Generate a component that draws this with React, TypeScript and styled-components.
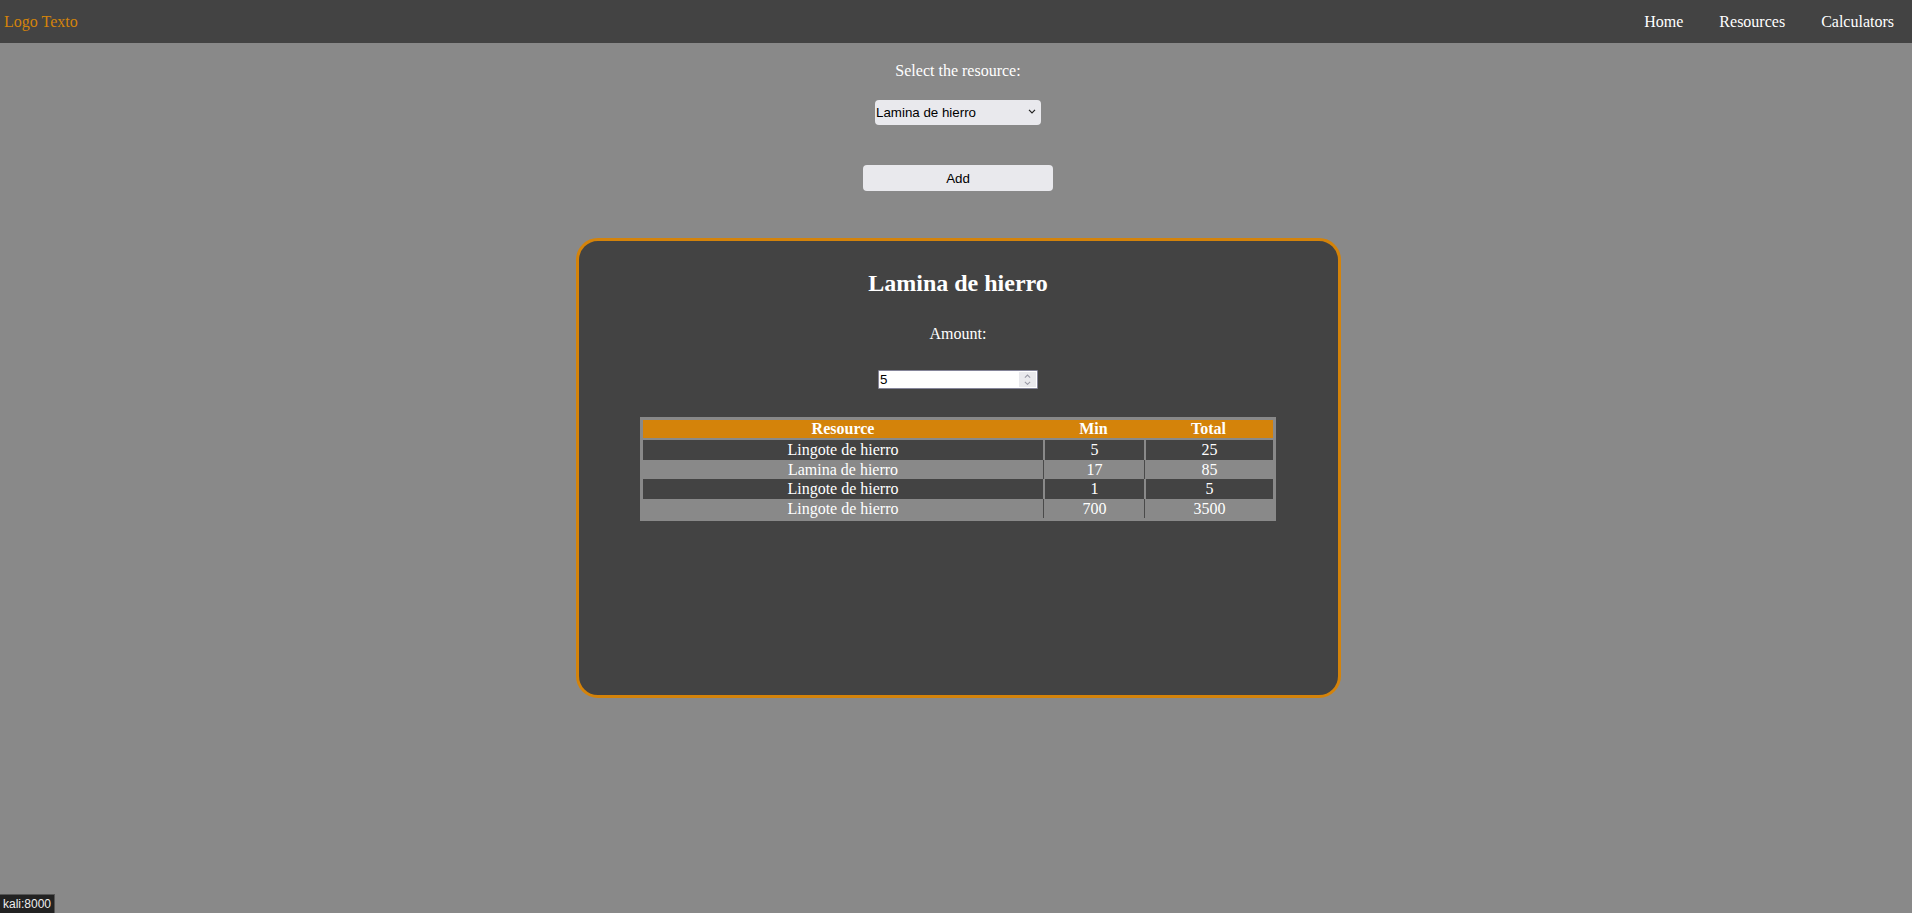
import React from "react";
import styled, { createGlobalStyle } from "styled-components";

const colors = {
  dark: "#434343",
  gray: "#898989",
  orange: "#d4830a",
  control: "#e9e9ed",
};

const GlobalStyle = createGlobalStyle`
  html, body {
    margin: 0;
    padding: 0;
    background: ${colors.gray};
    color: #ffffff;
    font-family: "Liberation Serif", "Times New Roman", serif;
    font-size: 16px;
  }
`;

type Row = { name: string; min: number; total: number };

const rows: Row[] = [
  { name: "Lingote de hierro", min: 5, total: 25 },
  { name: "Lamina de hierro", min: 17, total: 85 },
  { name: "Lingote de hierro", min: 1, total: 5 },
  { name: "Lingote de hierro", min: 700, total: 3500 },
];

const NavBar = styled.nav`
  height: 43px;
  background: ${colors.dark};
  display: flex;
  align-items: center;
  justify-content: space-between;
`;

const Logo = styled.a`
  color: ${colors.orange};
  padding-left: 4px;
  text-decoration: none;
`;

const NavLinks = styled.div`
  display: flex;
`;

const NavLink = styled.a`
  color: #ffffff;
  text-decoration: none;
  padding: 0 18px;
`;

const Main = styled.main`
  display: flex;
  flex-direction: column;
  align-items: center;
  padding-left: 4px;
`;

const Label = styled.p<{ $top: number }>`
  margin: ${(p) => p.$top}px 0 0;
  line-height: 18px;
`;

const SelectWrap = styled.div`
  position: relative;
  margin-top: 20px;
  width: 166px;
  height: 25px;
  svg {
    position: absolute;
    right: 5px;
    top: 9px;
    pointer-events: none;
  }
`;

const Select = styled.select`
  appearance: none;
  width: 100%;
  height: 100%;
  border: none;
  border-radius: 4px;
  background: ${colors.control};
  color: #000;
  font-family: "Liberation Sans", Arial, sans-serif;
  font-size: 13.33px;
  padding: 0 0 0 1px;
  outline: none;
`;

const Button = styled.button`
  margin-top: 40px;
  width: 190px;
  height: 26px;
  border: none;
  border-radius: 4px;
  background: ${colors.control};
  color: #000;
  font-family: "Liberation Sans", Arial, sans-serif;
  font-size: 13.33px;
  cursor: pointer;
`;

const Card = styled.section`
  box-sizing: border-box;
  margin-top: 47px;
  width: 765px;
  height: 460px;
  border: 3px solid ${colors.orange};
  border-radius: 22px;
  background: ${colors.dark};
  padding-top: 28px;
  display: flex;
  flex-direction: column;
  align-items: center;
`;

const Title = styled.h2`
  margin: 0;
  font-size: 24px;
  line-height: 28px;
  font-weight: bold;
`;

const NumberBox = styled.div`
  box-sizing: border-box;
  margin-top: 27px;
  width: 160px;
  height: 19px;
  display: flex;
  background: #ffffff;
  border: 1px solid #85859a;
  border-radius: 1px;
`;

const NumberInput = styled.input`
  flex: 1;
  min-width: 0;
  border: none;
  outline: none;
  padding: 0 1px;
  background: transparent;
  color: #000;
  font-family: "Liberation Sans", Arial, sans-serif;
  font-size: 13.33px;
`;

const Spinner = styled.div`
  width: 17px;
  margin: 1px;
  background: ${colors.control};
  display: flex;
  flex-direction: column;
  align-items: center;
  justify-content: center;
  gap: 2px;
`;

const Table = styled.table`
  margin-top: 28px;
  width: 636px;
  background: ${colors.gray};
  padding: 3px;
  border-spacing: 0;
  table-layout: fixed;
`;

const HeadCell = styled.th<{ $width: number }>`
  width: ${(p) => p.$width}px;
  background: ${colors.orange};
  border-bottom: 2px solid ${colors.gray};
  height: 18px;
  padding: 0;
  line-height: 18px;
  font-weight: bold;
`;

const BodyRow = styled.tr<{ $dark: boolean }>`
  background: ${(p) => (p.$dark ? colors.dark : colors.gray)};
  td + td {
    border-left: ${(p) => (p.$dark ? `2px solid ${colors.gray}` : "1px solid #4a4a4a")};
    padding-left: ${(p) => (p.$dark ? "0" : "1px")};
  }
`;

const Cell = styled.td`
  height: 19.5px;
  padding: 0;
  line-height: 19.5px;
  text-align: center;
`;

const Status = styled.div`
  position: fixed;
  left: 0;
  bottom: 0;
  height: 19px;
  padding: 0 3px;
  box-sizing: border-box;
  background: #222222;
  border: 1px solid #555555;
  border-left: none;
  border-bottom: none;
  color: #eeeeee;
  font-family: "Liberation Sans", Arial, sans-serif;
  font-size: 12px;
  line-height: 18px;
`;

const Chevron = ({ up, size = 8, color = "#888" }: { up?: boolean; size?: number; color?: string }) => (
  <svg width={size} height={size / 2 + 1} viewBox="0 0 8 5">
    <path
      d={up ? "M1 4.2 L4 1.2 L7 4.2" : "M1 0.8 L4 3.8 L7 0.8"}
      fill="none"
      stroke={color}
      strokeWidth="1.2"
    />
  </svg>
);

export default function App() {
  return (
    <>
      <GlobalStyle />
      <NavBar>
        <Logo href="#">Logo Texto</Logo>
        <NavLinks>
          <NavLink href="#">Home</NavLink>
          <NavLink href="#">Resources</NavLink>
          <NavLink href="#">Calculators</NavLink>
        </NavLinks>
      </NavBar>
      <Main>
        <Label $top={19}>Select the resource:</Label>
        <SelectWrap>
          <Select defaultValue="lamina">
            <option value="lamina">Lamina de hierro</option>
            <option value="lingote">Lingote de hierro</option>
          </Select>
          <Chevron size={8} color="#222" />
        </SelectWrap>
        <Button>Add</Button>
        <Card>
          <Title>Lamina de hierro</Title>
          <Label $top={28}>Amount:</Label>
          <NumberBox>
            <NumberInput type="text" defaultValue="5" />
            <Spinner>
              <Chevron up size={7} color="#9a9aa6" />
              <Chevron size={7} color="#9a9aa6" />
            </Spinner>
          </NumberBox>
          <Table>
            <thead>
              <tr>
                <HeadCell $width={400}>Resource</HeadCell>
                <HeadCell $width={101}>Min</HeadCell>
                <HeadCell $width={129}>Total</HeadCell>
              </tr>
            </thead>
            <tbody>
              {rows.map((r, i) => (
                <BodyRow key={i} $dark={i % 2 === 0}>
                  <Cell>{r.name}</Cell>
                  <Cell>{r.min}</Cell>
                  <Cell>{r.total}</Cell>
                </BodyRow>
              ))}
            </tbody>
          </Table>
        </Card>
      </Main>
      <Status>kali:8000</Status>
    </>
  );
}
